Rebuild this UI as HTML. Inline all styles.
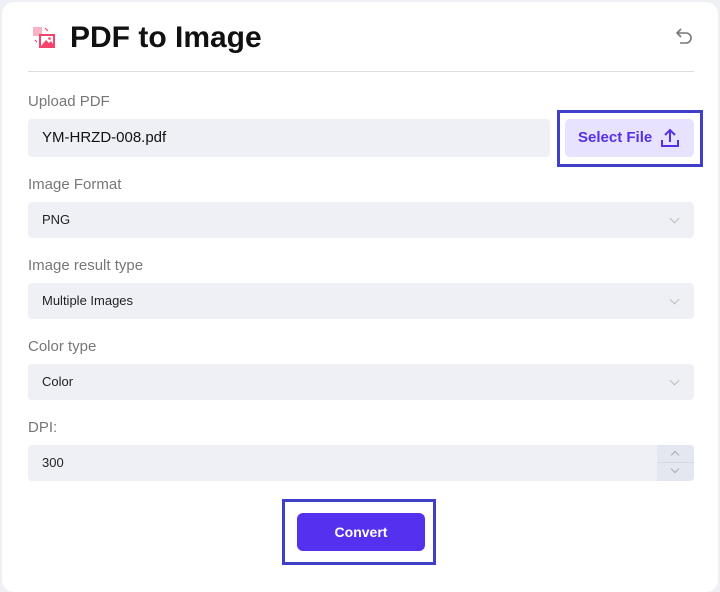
<!DOCTYPE html>
<html><head><style>
*{box-sizing:border-box;margin:0;padding:0}
body{width:720px;height:582px;background:#eef0f4;font-family:"Liberation Sans",sans-serif;position:relative;overflow:hidden}
.card{position:absolute;left:2px;top:2px;width:716px;height:590px;background:#fff;border-radius:12px}
.abs{position:absolute}
.title{left:70px;top:21px;font-size:30px;font-weight:bold;color:#111}
.hr{left:28px;top:71px;width:666px;height:1px;background:#ddd}
.lbl{left:28px;font-size:15px;color:#777}
.field{left:28px;width:666px;height:36px;background:#eff0f5;border-radius:4px;font-size:13px;color:#222;padding-left:14px;line-height:36px}
.chev{position:absolute;right:16px;top:13px;width:7px;height:7px;border-right:1px solid #bbb;border-bottom:1px solid #bbb;transform:rotate(45deg)}
</style></head><body>
<div class="card"></div>
<svg class="abs" style="left:32px;top:26px" width="26" height="24" viewBox="0 0 26 24">
<rect x="1" y="1" width="9" height="9" fill="#f8b4c4"/>
<rect x="7" y="8" width="16" height="14" fill="#f5436e"/>
<rect x="9" y="10" width="12" height="10" fill="#fff"/>
<path d="M9 20 L14 14 L17 17 L19 15 L21 18 L21 20Z" fill="#f5436e"/>
<circle cx="17.5" cy="12.5" r="1.3" fill="#f5436e"/>
<path d="M13 2l3 3M3 14l2 2" stroke="#f5436e" stroke-width="1.2"/>
</svg>
<div class="abs title">PDF to Image</div>
<svg class="abs" style="left:676px;top:27px" width="16" height="18" viewBox="0 0 16 18"><path d="M5 2 L1 6 L5 10 M1 6 H10 A5 5 0 0 1 10 16 H4" fill="none" stroke="#777" stroke-width="1.6"/></svg>
<div class="abs hr"></div>
<div class="abs lbl" style="top:93px">Upload PDF</div>
<div class="abs field" style="top:119px;width:522px;height:38px;line-height:38px;font-size:15px;color:#111">YM-HRZD-008.pdf</div>
<div class="abs" style="left:557px;top:110px;width:146px;height:57px;border:3px solid #3f3fc9"></div>
<div class="abs" style="left:565px;top:119px;width:129px;height:38px;background:#e7e2fd;border-radius:5px;color:#5530e8;font-weight:bold;font-size:15px;line-height:38px;padding-left:13px">Select File</div>
<svg class="abs" style="left:660px;top:128px" width="20" height="20" viewBox="0 0 20 20"><path d="M10 14V2M5 7l5-5 5 5M2 12v6h16v-6" fill="none" stroke="#5530e8" stroke-width="2"/></svg>
<div class="abs lbl" style="top:176px">Image Format</div>
<div class="abs field" style="top:202px">PNG<span class="chev"></span></div>
<div class="abs lbl" style="top:257px">Image result type</div>
<div class="abs field" style="top:283px">Multiple Images<span class="chev"></span></div>
<div class="abs lbl" style="top:338px">Color type</div>
<div class="abs field" style="top:364px">Color<span class="chev"></span></div>
<div class="abs lbl" style="top:419px">DPI:</div>
<div class="abs field" style="top:445px">300</div>
<div class="abs" style="left:657px;top:445px;width:37px;height:36px;background:#e4e7ef;border-radius:0 4px 4px 0"></div>
<div class="abs" style="left:657px;top:462px;width:37px;height:1px;background:#d6d9e2"></div>
<div class="abs" style="left:672px;top:452px;width:6px;height:6px;border-left:1px solid #aaa;border-top:1px solid #aaa;transform:rotate(45deg)"></div>
<div class="abs" style="left:672px;top:466px;width:6px;height:6px;border-right:1px solid #aaa;border-bottom:1px solid #aaa;transform:rotate(45deg)"></div>
<div class="abs" style="left:282px;top:499px;width:154px;height:66px;border:3px solid #3f3fc9"></div>
<div class="abs" style="left:297px;top:513px;width:128px;height:38px;background:#5530ee;border-radius:6px;color:#fff;font-weight:bold;font-size:14px;line-height:38px;text-align:center">Convert</div>
</body></html>
